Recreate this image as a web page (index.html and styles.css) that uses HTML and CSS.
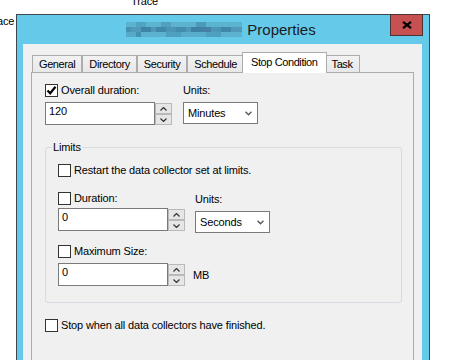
FILE: index.html
```html
<!DOCTYPE html>
<html lang="en">
<head>
    <meta charset="UTF-8">
    <meta name="viewport" content="width=device-width, initial-scale=1.0">
    <title>Properties</title>
    <link rel="stylesheet" href="styles.css">
</head>
<body>
    <span class="behind behind-trace">Trace</span>
    <span class="behind behind-ace">ace</span>

    <div class="window">
        <div class="titlebar">
            <span class="blurred"></span>
            <span class="title">Properties</span>
            <div class="close">
                <svg width="10" height="8" viewBox="0 0 10 8"><path d="M1 0.8 L9 7.2 M9 0.8 L1 7.2" stroke="#000" stroke-width="2.2" fill="none"/></svg>
            </div>
        </div>

        <div class="client">
            <div class="tabs">
                <div class="tab">General</div>
                <div class="tab">Directory</div>
                <div class="tab">Security</div>
                <div class="tab">Schedule</div>
                <div class="tab active">Stop Condition</div>
                <div class="tab">Task</div>
            </div>

            <div class="page">
                <div class="row">
                    <div class="field">
                        <div class="check">
                            <span class="box"><svg width="11" height="11" viewBox="0 0 11 11"><path d="M1.5 5.5 L4.2 8.3 L9.5 1.8" stroke="#000" stroke-width="2.2" fill="none"/></svg></span>
                            Overall duration:
                        </div>
                        <div class="spin">
                            <div class="spin-input">120</div>
                            <div class="spin-buttons">
                                <div class="spin-btn"><svg width="7" height="4" viewBox="0 0 7 4"><path d="M0.5 3.5 L3.5 0.5 L6.5 3.5" stroke="#333" stroke-width="1.2" fill="none"/></svg></div>
                                <div class="spin-btn"><svg width="7" height="4" viewBox="0 0 7 4"><path d="M0.5 0.5 L3.5 3.5 L6.5 0.5" stroke="#333" stroke-width="1.2" fill="none"/></svg></div>
                            </div>
                        </div>
                    </div>
                    <div class="field">
                        <div class="caption">Units:</div>
                        <div class="select">
                            Minutes
                            <svg width="7" height="5" viewBox="0 0 7 5"><path d="M0.5 0.8 L3.5 3.8 L6.5 0.8" stroke="#555" stroke-width="1.3" fill="none"/></svg>
                        </div>
                    </div>
                </div>

                <fieldset class="group">
                    <legend>Limits</legend>
                    <div class="check">
                        <span class="box"></span>
                        Restart the data collector set at limits.
                    </div>

                    <div class="row limits-row">
                        <div class="field tight">
                            <div class="check">
                                <span class="box"></span>
                                Duration:
                            </div>
                            <div class="spin">
                                <div class="spin-input">0</div>
                                <div class="spin-buttons">
                                    <div class="spin-btn"><svg width="7" height="4" viewBox="0 0 7 4"><path d="M0.5 3.5 L3.5 0.5 L6.5 3.5" stroke="#333" stroke-width="1.2" fill="none"/></svg></div>
                                    <div class="spin-btn"><svg width="7" height="4" viewBox="0 0 7 4"><path d="M0.5 0.5 L3.5 3.5 L6.5 0.5" stroke="#333" stroke-width="1.2" fill="none"/></svg></div>
                                </div>
                            </div>
                        </div>
                        <div class="field units-low">
                            <div class="caption">Units:</div>
                            <div class="select">
                                Seconds
                                <svg width="7" height="5" viewBox="0 0 7 5"><path d="M0.5 0.8 L3.5 3.8 L6.5 0.8" stroke="#555" stroke-width="1.3" fill="none"/></svg>
                            </div>
                        </div>
                    </div>

                    <div class="field size-field">
                        <div class="check">
                            <span class="box"></span>
                            Maximum Size:
                        </div>
                        <div class="spin-row">
                            <div class="spin">
                                <div class="spin-input">0</div>
                                <div class="spin-buttons">
                                    <div class="spin-btn"><svg width="7" height="4" viewBox="0 0 7 4"><path d="M0.5 3.5 L3.5 0.5 L6.5 3.5" stroke="#333" stroke-width="1.2" fill="none"/></svg></div>
                                    <div class="spin-btn"><svg width="7" height="4" viewBox="0 0 7 4"><path d="M0.5 0.5 L3.5 3.5 L6.5 0.5" stroke="#333" stroke-width="1.2" fill="none"/></svg></div>
                                </div>
                            </div>
                            <span>MB</span>
                        </div>
                    </div>
                </fieldset>

                <div class="check stop-check">
                    <span class="box"></span>
                    Stop when all data collectors have finished.
                </div>
            </div>
        </div>
    </div>
</body>
</html>
```

FILE: styles.css
```css
* {
    box-sizing: border-box;
}
body {
    margin: 0;
    width: 465px;
    height: 360px;
    overflow: hidden;
    position: relative;
    background: #fff;
    font-family: "Liberation Sans", Arial, sans-serif;
    font-size: 11px;
    letter-spacing: -0.15px;
    color: #000;
}
.behind {
    position: absolute;
    line-height: 13px;
}
.behind-trace {
    left: 131px;
    top: -5px;
}
.behind-ace {
    left: -3px;
    top: 15px;
}

/* window frame */
.window {
    position: absolute;
    left: 16px;
    top: 14px;
    width: 414px;
    height: 360px;
    border: 1px solid #3f474e;
    background: #65c9ea;
    padding: 0 7px 0 6px;
}
.titlebar {
    position: relative;
    height: 29px;
    display: flex;
    align-items: center;
    justify-content: center;
    gap: 5px;
    padding-right: 3px;
}
.title {
    font-size: 15px;
    line-height: 18px;
    letter-spacing: 0;
    color: #1b1b1b;
}
.blurred {
    width: 116px;
    height: 15px;
    background:
        linear-gradient(90deg, #5cb3d0 0 10px, #4fa2c1 10px 20px, #5db4d1 20px 35px, #529fbe 35px 45px, #5cb2cf 45px 70px, #4c9aba 70px 80px, #5cb3d0 80px 116px) 0 0 / 116px 5px no-repeat,
        linear-gradient(90deg, #4592b3 0 5px, #5099b9 5px 15px, #3d85a7 15px 25px, #5299b8 25px 30px, #3f88aa 30px 40px, #4a95b5 40px 50px, #448cae 50px 60px, #4f98b8 60px 65px, #3c82a5 65px 75px, #4580a8 75px 85px, #4b95b5 85px 95px, #3f88aa 95px 105px, #5099b8 105px 116px) 0 5px / 116px 5px no-repeat,
        linear-gradient(90deg, #56aac8 0 10px, #4591b2 10px 15px, #5cb3d0 15px 40px, #4f9fbe 40px 55px, #58adca 55px 80px, #4f9fbe 80px 95px, #5cb2cf 95px 116px) 0 10px / 116px 5px no-repeat;
}
.close {
    position: absolute;
    top: -1px;
    right: -1px;
    width: 33px;
    height: 22px;
    background: #c75050;
    border: 1px solid #4d3434;
    display: flex;
    align-items: center;
    justify-content: center;
}

/* dialog body */
.client {
    height: 320px;
    background: #f0f0f0;
    padding: 8px 8px 0 8px;
}
.tabs {
    display: flex;
    align-items: flex-end;
    height: 20px;
    padding-left: 1px;
}
.tab {
    height: 17px;
    padding: 1px 6px 0;
    border: 1px solid #acacac;
    border-bottom: none;
    background: linear-gradient(#f2f2f2, #e8e8e8);
    line-height: 15px;
    letter-spacing: -0.4px;
    white-space: nowrap;
}
.tab.active {
    position: relative;
    z-index: 1;
    height: 21px;
    margin: 0 -2px -1px;
    padding-top: 2px;
    padding-left: 8px;
    padding-right: 8px;
    background: #fff;
}
.page {
    height: 300px;
    border: 1px solid #acacac;
    padding: 11px 11px 0 13px;
}
.row {
    display: flex;
    gap: 11px;
}
.field {
    display: flex;
    flex-direction: column;
    gap: 5px;
}
.check {
    display: flex;
    align-items: center;
    gap: 3px;
    height: 13px;
    line-height: 13px;
    white-space: nowrap;
}
.box {
    flex: none;
    width: 13px;
    height: 13px;
    border: 1px solid #333;
    background: #fff;
    display: flex;
}
.caption {
    height: 13px;
    line-height: 13px;
}
.spin {
    display: flex;
}
.spin-input {
    width: 110px;
    height: 23px;
    border: 1px solid #7a7a7a;
    background: #fff;
    padding: 2px 3px;
    line-height: 13px;
}
.spin-buttons {
    width: 17px;
    height: 23px;
    padding-top: 1px;
    display: flex;
    flex-direction: column;
}
.spin-btn {
    height: 11px;
    border: 1px solid #b9b9b9;
    background: #e6e6e6;
    display: flex;
    align-items: center;
    justify-content: center;
}
.select {
    width: 75px;
    height: 22px;
    border: 1px solid #7a7a7a;
    background: #fff;
    display: flex;
    align-items: center;
    justify-content: space-between;
    padding: 0 5px 0 4px;
}

/* limits group */
.group {
    margin: 15px 0 0;
    border: 1px solid #d5dbe0;
    border-radius: 3px;
    padding: 10px 0 16px 12px;
    min-width: 0;
}
.group legend {
    margin-left: -6px;
    padding: 0 1px;
    line-height: 14px;
}
.limits-row {
    margin-top: 15px;
    gap: 10px;
}
.tight {
    gap: 3px;
}
.units-low .caption {
    margin-top: 1px;
}
.size-field {
    margin-top: 12px;
}
.spin-row {
    display: flex;
    align-items: center;
    gap: 8px;
}
.stop-check {
    margin-top: 16px;
}
```
